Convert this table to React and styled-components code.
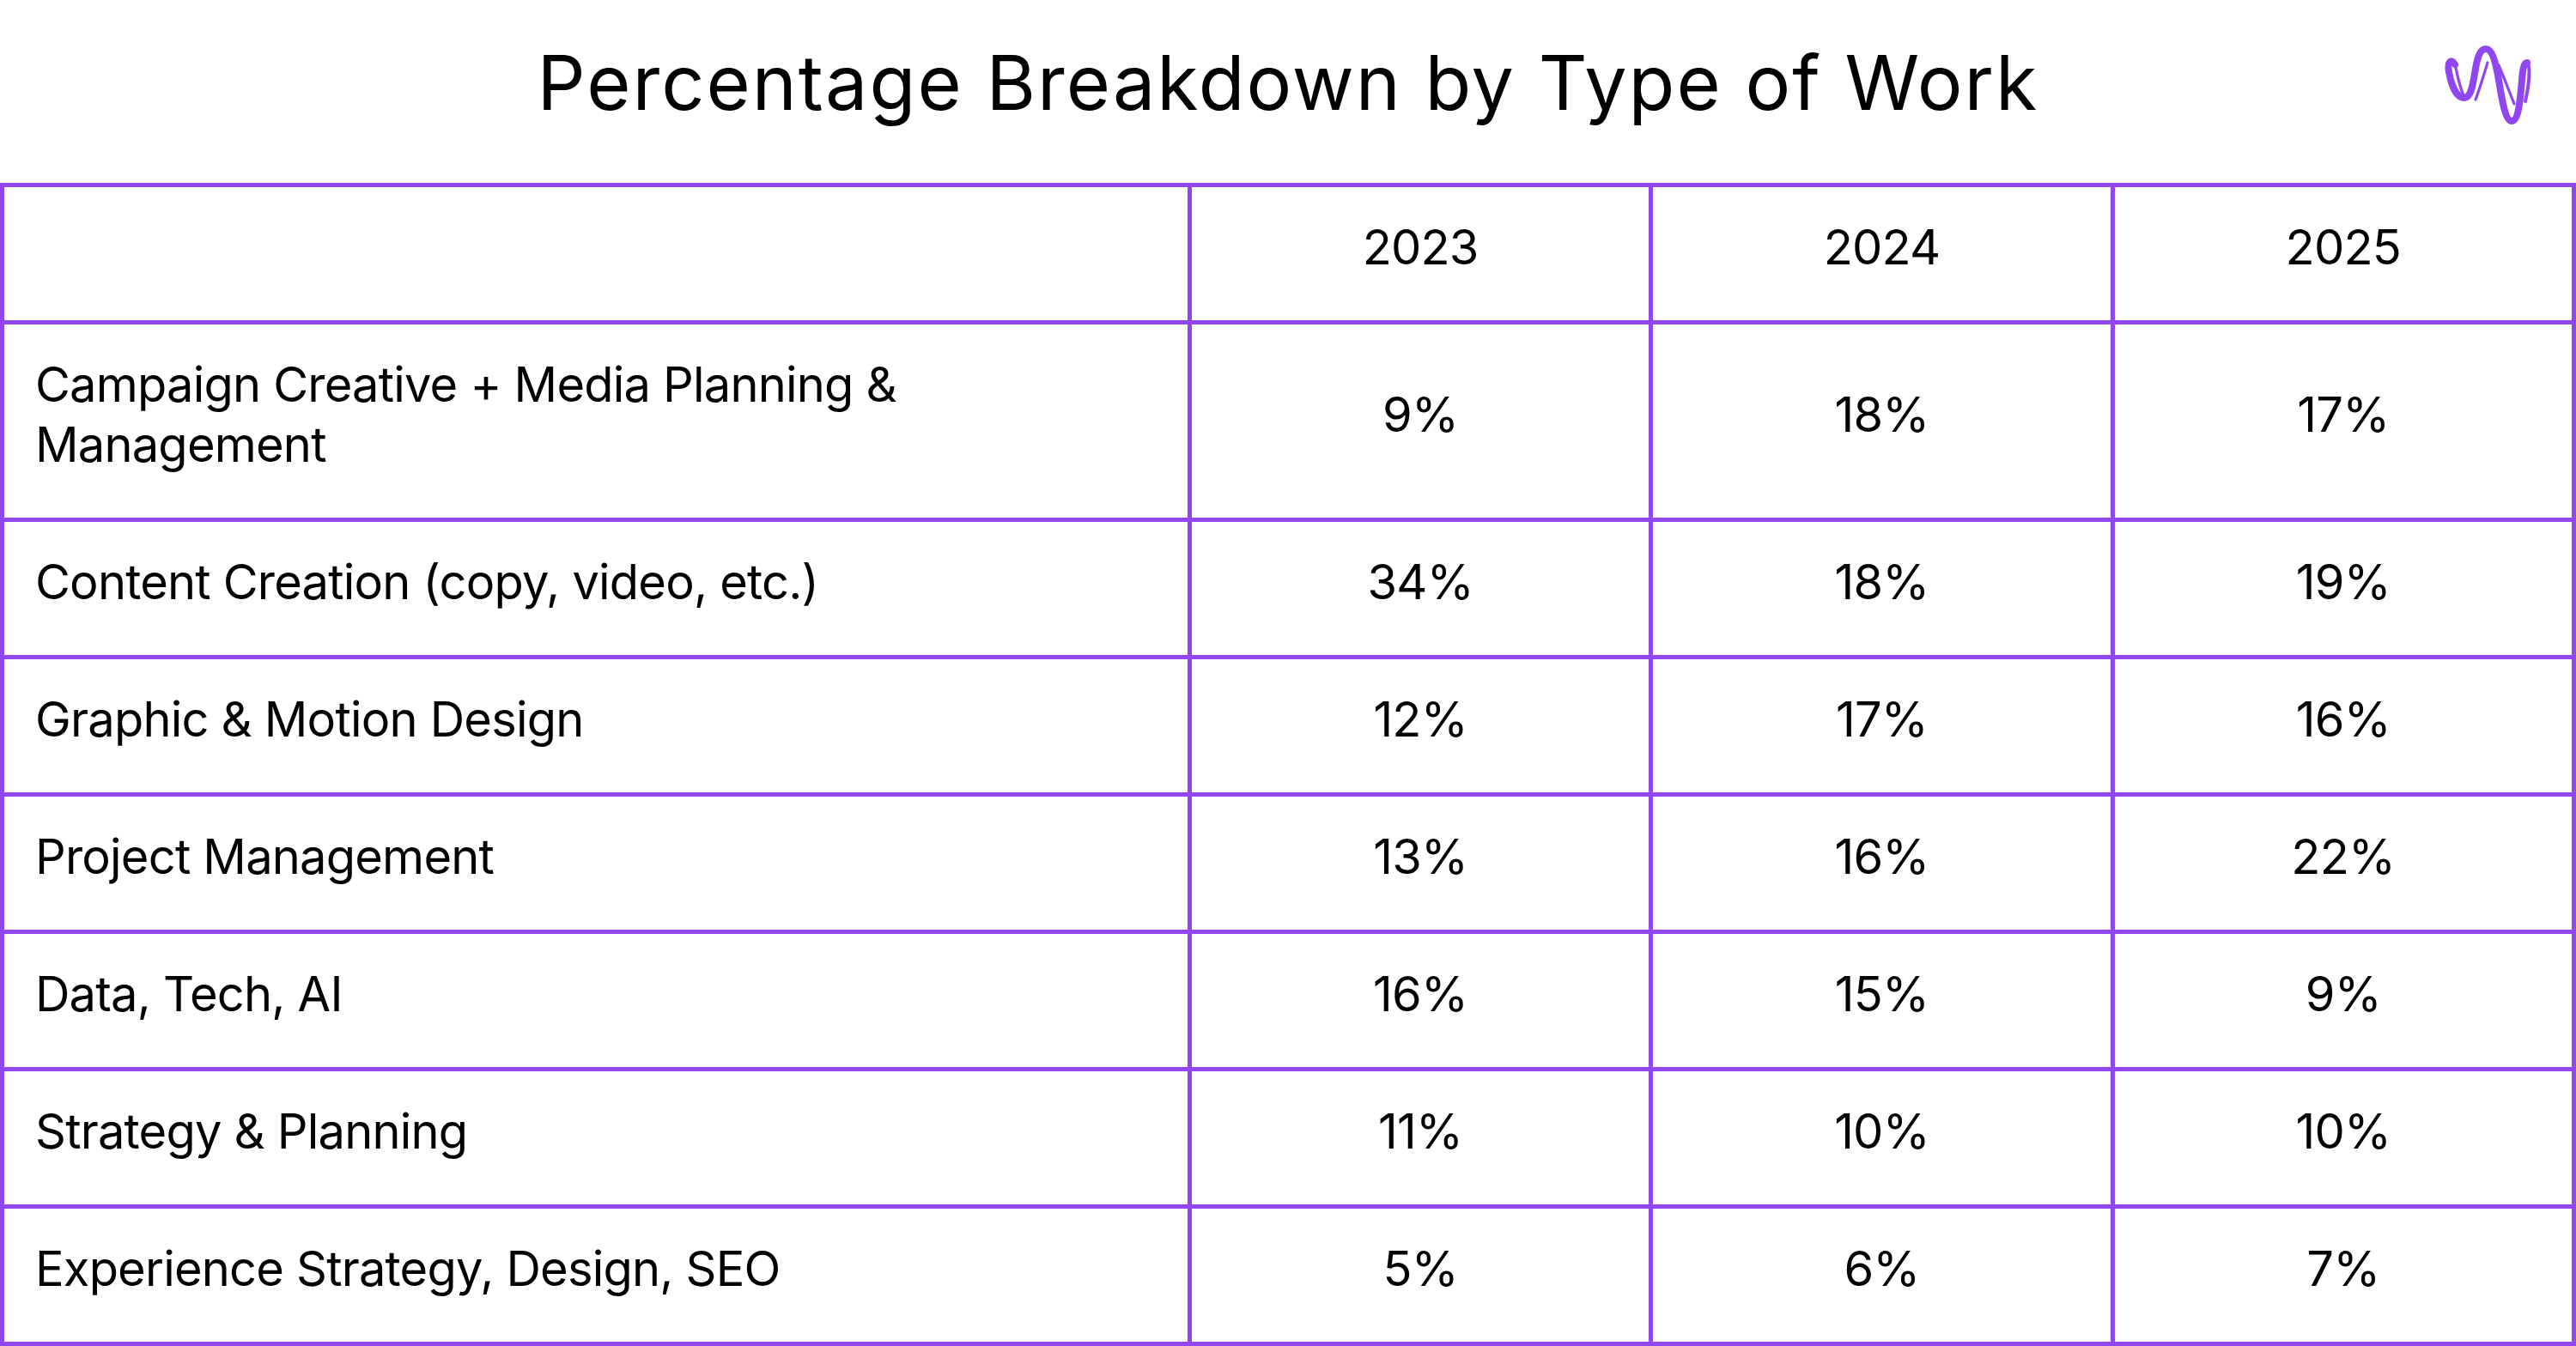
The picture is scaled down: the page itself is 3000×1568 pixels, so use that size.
import React from 'react';
import styled, { createGlobalStyle } from 'styled-components';

const PURPLE = '#9147EF';

const GlobalStyle = createGlobalStyle`
  *, *::before, *::after { box-sizing: border-box; }
  html, body { margin: 0; padding: 0; background: #ffffff; }
  body {
    font-family: Inter, "Liberation Sans", sans-serif;
    color: #000000;
    -webkit-font-smoothing: antialiased;
  }
`;

const Page = styled.div`
  width: 3000px;
  background: #ffffff;
`;

const Header = styled.header`
  height: 213px;
  display: grid;
  grid-template-columns: 1fr auto 1fr;
  align-items: start;
  padding: 0 40px;
`;

const Title = styled.h1`
  grid-column: 2;
  margin: 52px 0 0;
  font-size: 88px;
  line-height: 88px;
  font-weight: 400;
  letter-spacing: 2px;
  white-space: nowrap;
`;

const LogoBox = styled.div`
  grid-column: 3;
  justify-self: end;
  margin-top: 48px;
  width: 120px;
  height: 105px;
  svg { display: block; }
`;

const Table = styled.div`
  display: grid;
  grid-template-columns: 1383px repeat(3, 1fr);
  border-top: 5px solid ${PURPLE};
  border-left: 5px solid ${PURPLE};
`;

const Cell = styled.div`
  display: flex;
  align-items: center;
  justify-content: ${(p) => (p.$label ? 'flex-start' : 'center')};
  text-align: ${(p) => (p.$label ? 'left' : 'center')};
  border-right: 5px solid ${PURPLE};
  border-bottom: 5px solid ${PURPLE};
  padding: 35px 36px 50px;
  min-height: 160px;
  font-size: 56px;
  line-height: 70px;
  letter-spacing: -0.8px;
  font-weight: 400;
  color: #000;
`;

const Logo = () => (
  <svg width="120" height="105" viewBox="0 0 120 105" fill="none">
    <path
      d="M19 27 C14 19, 10 25, 12 36 C15 52, 21 66, 30 66 C38 66, 40 50, 43 32 C46 14, 50 9, 55 9 C62 9, 66 22, 70 45 C74 70, 78 93, 85 93 C93 93, 95 70, 97 45 C98 30, 100 25, 103 25"
      stroke={PURPLE}
      strokeWidth="8"
      strokeLinecap="round"
      strokeLinejoin="round"
    />
    <path d="M19 27 C22 40, 25 55, 29 63" stroke={PURPLE} strokeWidth="3.2" strokeLinecap="round" />
    <path d="M43 68 C48 55, 53 38, 57 25" stroke={PURPLE} strokeWidth="3.2" strokeLinecap="round" />
    <path d="M70 28 C76 42, 82 58, 88 73" stroke={PURPLE} strokeWidth="3.2" strokeLinecap="round" />
    <path d="M103 25 C107 28, 106 48, 101 70" stroke={PURPLE} strokeWidth="4" strokeLinecap="round" />
  </svg>
);

const years = ['2023', '2024', '2025'];

const rows = [
  ['Campaign Creative + Media Planning & Management', '9%', '18%', '17%'],
  ['Content Creation (copy, video, etc.)', '34%', '18%', '19%'],
  ['Graphic & Motion Design', '12%', '17%', '16%'],
  ['Project Management', '13%', '16%', '22%'],
  ['Data, Tech, AI', '16%', '15%', '9%'],
  ['Strategy & Planning', '11%', '10%', '10%'],
  ['Experience Strategy, Design, SEO', '5%', '6%', '7%'],
];

export default function App() {
  return (
    <Page>
      <GlobalStyle />
      <Header>
        <Title>Percentage Breakdown by Type of Work</Title>
        <LogoBox>
          <Logo />
        </LogoBox>
      </Header>
      <Table role="table">
        <Cell $label role="columnheader" />
        {years.map((y) => (
          <Cell key={y} role="columnheader">{y}</Cell>
        ))}
        {rows.map((r) => (
          <React.Fragment key={r[0]}>
            <Cell $label role="rowheader">{r[0]}</Cell>
            {r.slice(1).map((v, i) => (
              <Cell key={i} role="cell">{v}</Cell>
            ))}
          </React.Fragment>
        ))}
      </Table>
    </Page>
  );
}
